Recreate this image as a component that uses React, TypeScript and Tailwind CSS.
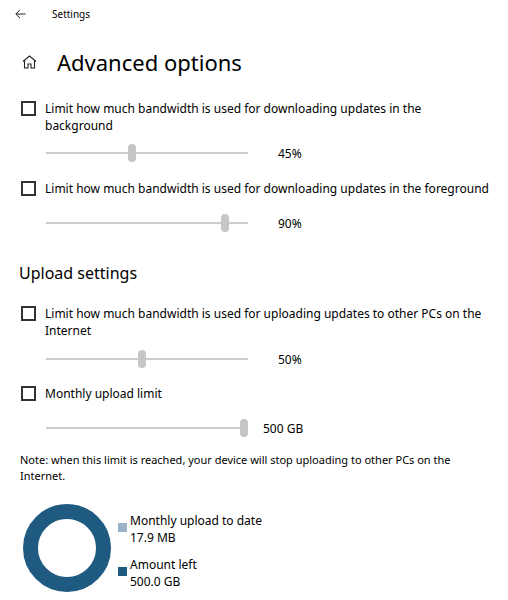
import React from "react";

function Checkbox({ lines }: { lines: string[] }) {
  return (
    <div className="flex items-start">
      <div className="mt-[1px] w-[15px] h-[15px] border-2 border-[#333333] shrink-0 bg-white" />
      <div className="ml-[9px] text-[12px] leading-[17px] text-black whitespace-nowrap">
        {lines.map((l, i) => (
          <div key={i}>{l}</div>
        ))}
      </div>
    </div>
  );
}

function Slider({ pos, label, labelLeft }: { pos: number; label: string; labelLeft: number }) {
  return (
    <div className="flex items-center h-[20px] pl-[25px]">
      <div className="relative w-[202px] h-[20px] flex items-center shrink-0">
        <div className="w-full h-[2px] bg-[#cccccc]" />
        <div
          className="absolute top-[1px] w-[8px] h-[18px] rounded-full bg-[#c6c6c6]"
          style={{ left: pos - 4 }}
        />
      </div>
      <div className="text-[12px] leading-[17px] text-black" style={{ marginLeft: labelLeft }}>
        {label}
      </div>
    </div>
  );
}

export default function App() {
  return (
    <div className="w-[508px] h-[600px] bg-white overflow-hidden font-['Noto_Sans',sans-serif] text-black">
      {/* header */}
      <div className="flex items-center h-[28px]">
        <svg className="ml-[15px]" width="11" height="10" viewBox="0 0 11 10" fill="none" stroke="#222" strokeWidth="1">
          <path d="M10.5 5H1M5 0.8L0.8 5L5 9.2" />
        </svg>
        <span className="ml-[26px] text-[10px] text-black">Settings</span>
      </div>
      {/* title */}
      <div className="flex items-center h-[32px] mt-[18px]">
        <svg className="ml-[22px]" width="15" height="14" viewBox="0 0 15 14" fill="none" stroke="#222" strokeWidth="1.1">
          <path d="M1 6.5L7.5 1L14 6.5M2.5 5.5V13H6V9H9V13H12.5V5.5" />
        </svg>
        <span className="ml-[20px] text-[22px] leading-[32px] font-normal">Advanced options</span>
      </div>

      <div className="pl-[21px]">
        <div className="mt-[22px]">
          <Checkbox lines={["Limit how much bandwidth is used for downloading updates in the", "background"]} />
        </div>
        <div className="mt-[9px]">
          <Slider pos={86} label="45%" labelLeft={30} />
        </div>
        <div className="mt-[17px]">
          <Checkbox lines={["Limit how much bandwidth is used for downloading updates in the foreground"]} />
        </div>
        <div className="mt-[16px]">
          <Slider pos={179} label="90%" labelLeft={30} />
        </div>
      </div>

      <div className="pl-[19px] mt-[28px] text-[16px] leading-[24px]">Upload settings</div>

      <div className="pl-[21px]">
        <div className="mt-[20px]">
          <Checkbox lines={["Limit how much bandwidth is used for uploading updates to other PCs on the", "Internet"]} />
        </div>
        <div className="mt-[10px]">
          <Slider pos={96} label="50%" labelLeft={30} />
        </div>
        <div className="mt-[16px]">
          <Checkbox lines={["Monthly upload limit"]} />
        </div>
        <div className="mt-[16px]">
          <Slider pos={198} label="500 GB" labelLeft={15} />
        </div>
      </div>

      <div className="pl-[20px] mt-[14px] text-[11px] leading-[16px] whitespace-nowrap">
        <div>Note: when this limit is reached, your device will stop uploading to other PCs on the</div>
        <div>Internet.</div>
      </div>

      <div className="flex items-center pl-[23px] mt-[20px]">
        <svg width="88" height="88" viewBox="0 0 88 88">
          <circle cx="44" cy="44" r="36.5" fill="none" stroke="#1f5a80" strokeWidth="15" />
        </svg>
        <div className="ml-[7px] flex flex-col gap-[10px] mt-[6px]">
          <div className="flex items-start">
            <div className="mt-[11px] w-[9px] h-[9px] bg-[#9ab2c7] shrink-0" />
            <div className="ml-[3px] text-[12px] leading-[17px]">
              <div>Monthly upload to date</div>
              <div>17.9 MB</div>
            </div>
          </div>
          <div className="flex items-start">
            <div className="mt-[11px] w-[9px] h-[9px] bg-[#1f5a80] shrink-0" />
            <div className="ml-[3px] text-[12px] leading-[17px]">
              <div>Amount left</div>
              <div>500.0 GB</div>
            </div>
          </div>
        </div>
      </div>
    </div>
  );
}
